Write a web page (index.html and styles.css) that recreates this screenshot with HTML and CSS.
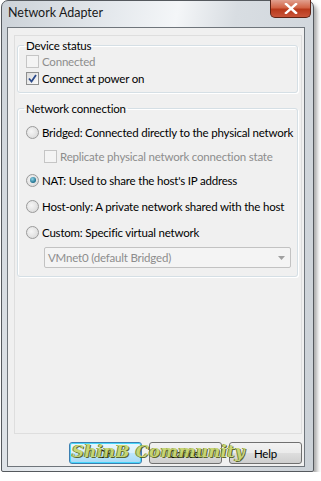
FILE: index.html
```html
<!DOCTYPE html>
<html lang="en">
<head>
    <meta charset="UTF-8">
    <meta name="viewport" content="width=device-width, initial-scale=1.0">
    <title>Network Adapter</title>
    <link rel="stylesheet" href="styles.css">
</head>
<body>
    <div class="window">
        <div class="titlebar">
            <span class="title">Network Adapter</span>
            <div class="close">
                <svg width="14" height="11" viewBox="0 0 14 11">
                    <path d="M2 1 L12 10 M12 1 L2 10" stroke="#fff" stroke-width="2.4" stroke-linecap="square"/>
                </svg>
            </div>
        </div>

        <div class="client">
            <div class="page">
                <!-- Device status -->
                <fieldset class="group device">
                    <legend>Device status</legend>
                    <div class="row disabled">
                        <span class="check"></span>
                        <span>Connected</span>
                    </div>
                    <div class="row">
                        <span class="check checked">
                            <svg width="9" height="9" viewBox="0 0 9 9"><path d="M1 4.5 L3.5 7.5 L8 1" fill="none" stroke="#2b4a8a" stroke-width="1.8"/></svg>
                        </span>
                        <span>Connect at power on</span>
                    </div>
                </fieldset>

                <!-- Network connection -->
                <fieldset class="group network">
                    <legend>Network connection</legend>
                    <div class="row opt">
                        <span class="radio"></span>
                        <span>Bridged: Connected directly to the physical network</span>
                    </div>
                    <div class="row opt sub disabled">
                        <span class="check"></span>
                        <span>Replicate physical network connection state</span>
                    </div>
                    <div class="row opt">
                        <span class="radio selected"><span class="dot"></span></span>
                        <span>NAT: Used to share the host's IP address</span>
                    </div>
                    <div class="row opt tall">
                        <span class="radio"></span>
                        <span>Host-only: A private network shared with the host</span>
                    </div>
                    <div class="row opt">
                        <span class="radio"></span>
                        <span>Custom: Specific virtual network</span>
                    </div>
                    <div class="select">
                        <span>VMnet0 (default Bridged)</span>
                        <svg width="7" height="4" viewBox="0 0 7 4"><path d="M0 0 H7 L3.5 4 Z" fill="#a0a0a0"/></svg>
                    </div>
                </fieldset>
            </div>

            <div class="buttons">
                <div class="btn default">OK</div>
                <div class="btn">Cancel</div>
                <div class="btn">Help</div>
            </div>
        </div>

        <div class="watermark">ShinB Community</div>
    </div>
</body>
</html>
```

FILE: styles.css
```css
body {
    margin: 0;
    background-color: #fff;
    font-family: Lato, "Liberation Sans", sans-serif;
    font-size: 11.5px;
    letter-spacing: -0.2px;
    color: #000;
}

.window {
    position: relative;
    margin-left: 1px;
    width: 311px;
    height: 470px;
    border: 1px solid #55595e;
    border-radius: 7px 7px 2px 2px;
    background: linear-gradient(100deg, #ccd2d8 0%, #e6eaee 30%, #f4f6f8 45%, #d8dde2 60%, #cbd1d7 100%);
    box-shadow: 3px 4px 4px rgba(0, 0, 0, 0.35);
}

/* title bar */
.titlebar {
    height: 26px;
    display: flex;
    align-items: flex-start;
    position: relative;
}
.title {
    margin-left: 6px;
    margin-top: 4px;
    font-size: 12.5px;
    letter-spacing: 0;
    color: #1a1a1a;
}
.close {
    position: absolute;
    top: -1px;
    right: 2px;
    width: 41px;
    height: 18px;
    border: 1px solid #5e2214;
    border-top: none;
    border-radius: 0 0 5px 5px;
    background: linear-gradient(#e1a08f 0%, #d26446 45%, #b8391b 55%, #c9553a 100%);
    display: flex;
    align-items: center;
    justify-content: center;
    box-sizing: border-box;
}

/* client area */
.client {
    margin: 0 8px 0 5px;
    height: 438px;
    border: 1px solid #6f757b;
    background-color: #f0f0f0;
    display: flex;
    flex-direction: column;
}
.page {
    margin: 7px 2px 0 6px;
    height: 397px;
    border: 1px solid #dedede;
    padding: 0 3px 0 2px;
}

/* group boxes */
.group {
    margin: 0;
    min-width: 0;
    border: 1px solid #d5dfe5;
    box-shadow: inset 1px 1px 0 #fff, 1px 1px 0 #fff;
    border-radius: 3px;
    padding: 0 6px 5px 8px;
}
.group legend {
    padding: 0 2px;
    margin-left: -2px;
    line-height: 15px;
}
.device {
    margin-top: 2px;
}
.network {
    margin-top: 8px;
    padding-top: 4px;
    padding-bottom: 8px;
}

.row {
    display: flex;
    align-items: center;
    height: 17px;
    white-space: nowrap;
}
.row .check,
.row .radio {
    margin-right: 3px;
}
.opt {
    height: 24px;
}
.opt.tall {
    height: 28px;
}
.sub {
    padding-left: 18px;
}
.disabled {
    color: #8d8d8d;
}

.check {
    width: 11px;
    height: 11px;
    border: 1px solid #8e8f8f;
    background: linear-gradient(135deg, #dcdcdc, #fafafa);
    display: flex;
    align-items: center;
    justify-content: center;
    flex-shrink: 0;
}
.disabled .check {
    border-color: #c5c5c5;
    background: #f4f4f4;
}
.radio {
    width: 11px;
    height: 11px;
    border: 1px solid #9a9a9a;
    border-radius: 50%;
    background: radial-gradient(circle at 40% 40%, #f6f6f6, #d4d4d4);
    display: flex;
    align-items: center;
    justify-content: center;
    flex-shrink: 0;
}
.radio .dot {
    width: 6px;
    height: 6px;
    border-radius: 50%;
    background: radial-gradient(circle at 40% 35%, #8fd3e8, #1c6f8c 70%);
}

.select {
    margin: 3px 0 0 18px;
    height: 19px;
    border: 1px solid #c2c2c2;
    border-radius: 2px;
    background-color: #f4f4f4;
    color: #8d8d8d;
    display: flex;
    align-items: center;
    justify-content: space-between;
    padding: 0 5px 0 3px;
}

/* buttons */
.buttons {
    display: flex;
    gap: 7px;
    margin: 8px 0 0 61px;
}
.btn {
    width: 71px;
    height: 20px;
    border: 1px solid #707070;
    border-radius: 3px;
    background: linear-gradient(#f2f2f2 0%, #ebebeb 48%, #dddddd 52%, #cfcfcf 100%);
    display: flex;
    align-items: center;
    justify-content: center;
}
.btn.default {
    border-color: #3c7fb1;
    background: linear-gradient(#eaf6fd 0%, #d9f0fc 48%, #bee6fd 52%, #a7d9f5 100%);
    box-shadow: inset 0 0 0 1px #48d7fb;
}

/* watermark over the buttons */
.watermark {
    position: absolute;
    left: 70px;
    top: 441px;
    font-family: "DejaVu Serif", serif;
    font-style: italic;
    font-weight: bold;
    font-size: 16.5px;
    letter-spacing: 0.3px;
    color: #c5d467;
    text-shadow: 1px 1px 0 #4e5a1c, -1px 0 0 #6f7d2a;
    opacity: 0.9;
}
```
